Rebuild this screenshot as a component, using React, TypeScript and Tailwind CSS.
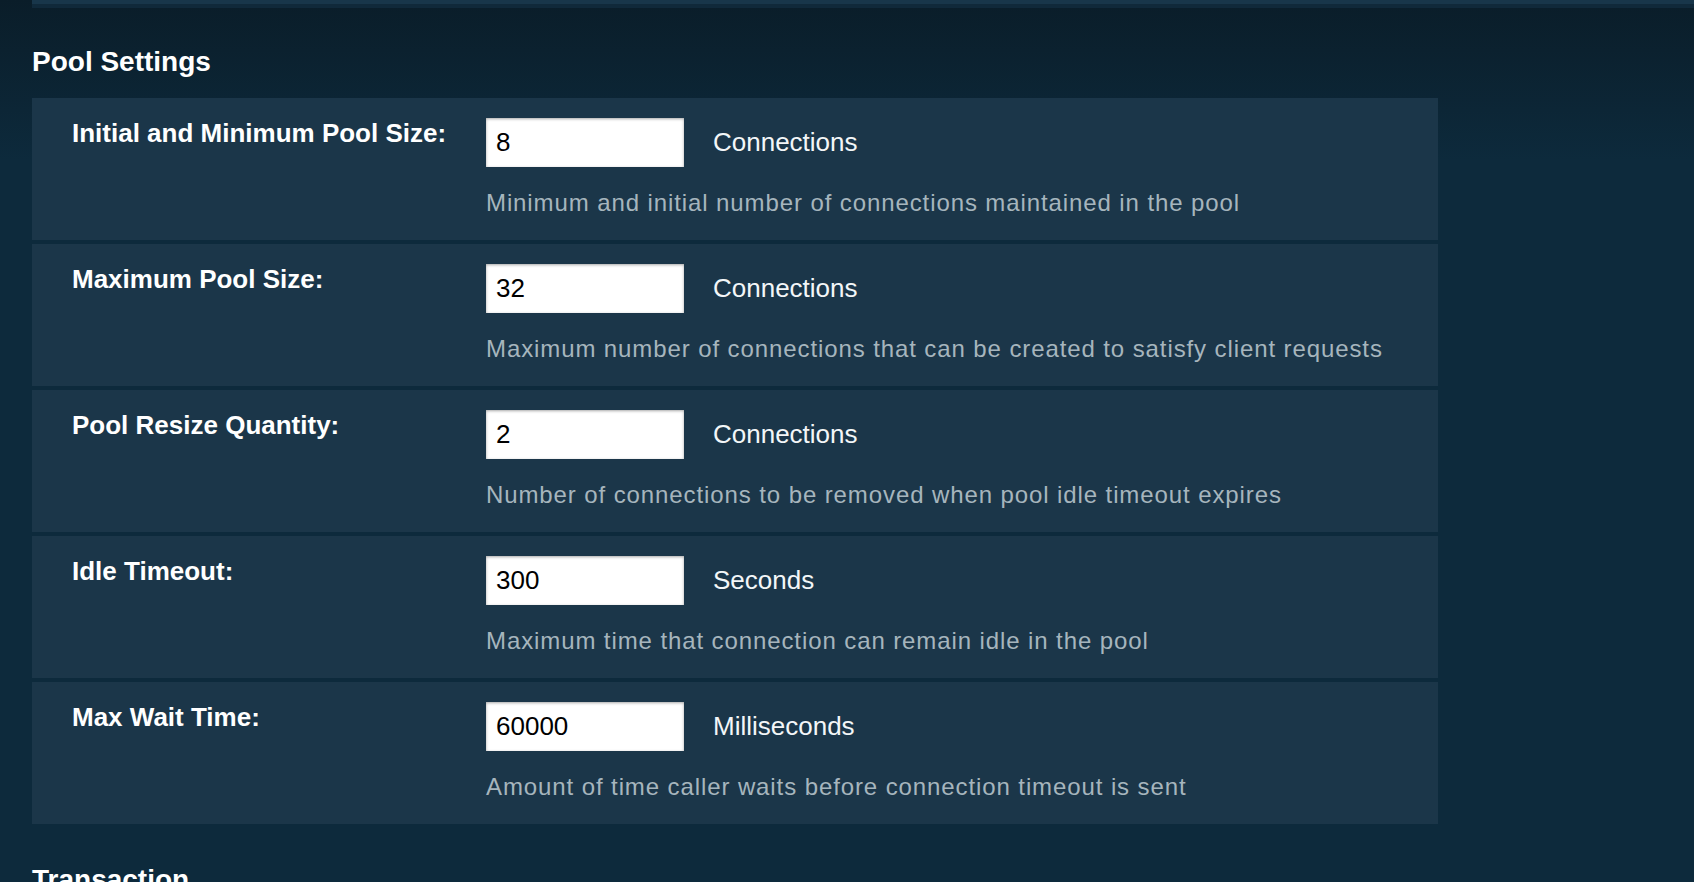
const rows = [
  {
    label: "Initial and Minimum Pool Size:",
    value: "8",
    unit: "Connections",
    help: "Minimum and initial number of connections maintained in the pool",
  },
  {
    label: "Maximum Pool Size:",
    value: "32",
    unit: "Connections",
    help: "Maximum number of connections that can be created to satisfy client requests",
  },
  {
    label: "Pool Resize Quantity:",
    value: "2",
    unit: "Connections",
    help: "Number of connections to be removed when pool idle timeout expires",
  },
  {
    label: "Idle Timeout:",
    value: "300",
    unit: "Seconds",
    help: "Maximum time that connection can remain idle in the pool",
  },
  {
    label: "Max Wait Time:",
    value: "60000",
    unit: "Milliseconds",
    help: "Amount of time caller waits before connection timeout is sent",
  },
];

function SettingRow({ label, value, unit, help }: (typeof rows)[number]) {
  return (
    <div className="flex bg-[#1b3649] pl-[40px] pt-[20px] pb-[23px]">
      <div className="w-[414px] shrink-0 text-[26px] leading-[30px] font-bold text-white">
        {label}
      </div>
      <div className="flex flex-col">
        <div className="flex items-center gap-[29px]">
          <input
            readOnly
            value={value}
            className="w-[198px] h-[49px] px-[10px] bg-white text-black text-[26px] outline-none shadow-[inset_0_1px_3px_rgba(0,0,0,0.35)]"
          />
          <span className="text-[26px] text-[#f3f6f8]">{unit}</span>
        </div>
        <p className="mt-[22px] text-[24px] leading-[28px] tracking-[0.9px] text-[#a6b5bd]">
          {help}
        </p>
      </div>
    </div>
  );
}

export default function App() {
  return (
    <div className="h-screen overflow-hidden bg-[linear-gradient(to_bottom,#0a1d29_0px,#0d2a3c_160px,#0d2a3c_100%)] font-['Liberation_Sans',Arial,sans-serif]">
      {/* strip left over from the section above */}
      <div className="ml-[32px]">
        <div className="h-[4px] bg-[#18364a]" />
        <div className="h-[4px] bg-[#10293a]" />
      </div>

      <div className="pl-[32px] pt-[38px]">
        <h2 className="text-[28px] leading-[32px] font-bold text-white mb-[20px]">
          Pool Settings
        </h2>

        <div className="w-[1406px] flex flex-col gap-[4px]">
          {rows.map((r) => (
            <SettingRow key={r.label} {...r} />
          ))}
        </div>

        <h2 className="mt-[40px] text-[28px] leading-[32px] font-bold text-white">
          Transaction
        </h2>
      </div>
    </div>
  );
}
